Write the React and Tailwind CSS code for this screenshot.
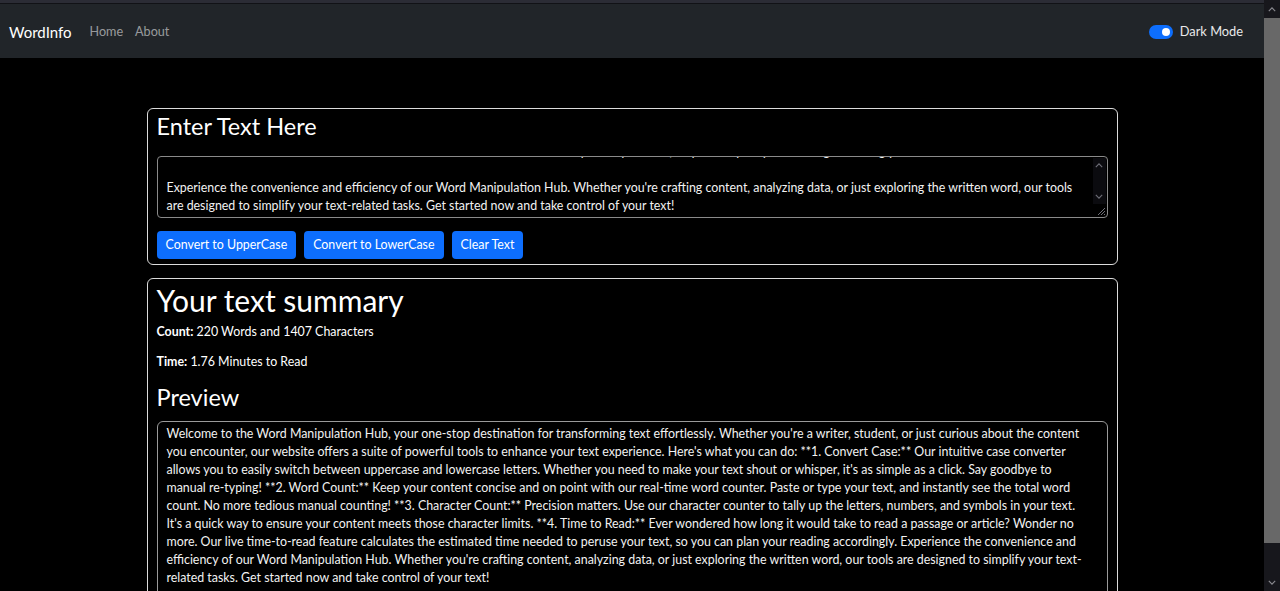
import React from 'react';

const inputLines = [
  "more. Our live time-to-read feature calculates the estimated time needed to peruse your text, so you can plan your reading accordingly.",
  "\u00a0",
  "Experience the convenience and efficiency of our Word Manipulation Hub. Whether you're crafting content, analyzing data, or just exploring the written word, our tools",
  "are designed to simplify your text-related tasks. Get started now and take control of your text!",
];

const previewLines = [
  "Welcome to the Word Manipulation Hub, your one-stop destination for transforming text effortlessly. Whether you're a writer, student, or just curious about the content",
  "you encounter, our website offers a suite of powerful tools to enhance your text experience. Here's what you can do: **1. Convert Case:** Our intuitive case converter",
  "allows you to easily switch between uppercase and lowercase letters. Whether you need to make your text shout or whisper, it's as simple as a click. Say goodbye to",
  "manual re-typing! **2. Word Count:** Keep your content concise and on point with our real-time word counter. Paste or type your text, and instantly see the total word",
  "count. No more tedious manual counting! **3. Character Count:** Precision matters. Use our character counter to tally up the letters, numbers, and symbols in your text.",
  "It's a quick way to ensure your content meets those character limits. **4. Time to Read:** Ever wondered how long it would take to read a passage or article? Wonder no",
  "more. Our live time-to-read feature calculates the estimated time needed to peruse your text, so you can plan your reading accordingly. Experience the convenience and",
  "efficiency of our Word Manipulation Hub. Whether you're crafting content, analyzing data, or just exploring the written word, our tools are designed to simplify your text-",
  "related tasks. Get started now and take control of your text!",
];

function Chevron({ up }) {
  return (
    <svg viewBox="0 0 10 6" className="h-[5px] w-[8px]" aria-hidden="true">
      <path d={up ? 'M1 5 L5 1 L9 5' : 'M1 1 L5 5 L9 1'} fill="none" stroke="currentColor" strokeWidth="1.4" />
    </svg>
  );
}

function Navbar() {
  return (
    <nav className="flex h-[54px] shrink-0 items-center justify-between bg-[#212529] pl-[9px] pr-[21px] pt-[2px]">
      <div className="flex items-center">
        <span className="text-[15px] text-white">WordInfo</span>
        <a className="ml-[18px] text-[12.6px] text-[#ffffff8c]">Home</a>
        <a className="ml-[12px] text-[12.6px] text-[#ffffff8c]">About</a>
      </div>
      <div className="flex items-center">
        <div className="flex h-[14px] w-[24px] items-center justify-end rounded-full bg-[#0d6efd] pr-[3px]">
          <div className="h-[8px] w-[8px] rounded-full bg-white" />
        </div>
        <span className="ml-[7px] text-[12.8px] text-[#e9e9ea]">Dark Mode</span>
      </div>
    </nav>
  );
}

function Button({ children }) {
  return (
    <button type="button" className="h-[28px] rounded-[4px] bg-[#0d6efd] px-[9px] text-[12.4px] text-white">
      {children}
    </button>
  );
}

export default function App() {
  return (
    <div className="flex h-[591px] w-[1280px] overflow-hidden bg-black text-white" style={{ fontFamily: 'Lato, "Noto Sans", sans-serif' }}>
      <div className="flex w-[1264px] flex-col">
        <div className="h-[3px] shrink-0 bg-[#2b2c35]" />
        <div className="h-[1px] shrink-0 bg-[#111216]" />
        <Navbar />

        <main className="mx-auto mt-[50px] flex w-[971px] shrink-0 flex-col gap-[13px]">
          <section className="shrink-0 rounded-[6px] border border-[#dcdcdc] px-[9px] pb-[5px] pt-[1px]">
            <h1 className="text-[23.5px] leading-[32px]">Enter Text Here</h1>
            <div className="relative mt-[14px] h-[62px] overflow-hidden rounded-[4px] border border-[#8a8a8a]">
              <div className="-mt-[17px] pl-[9px] pr-[24px] pt-[3px] text-[12.4px] leading-[18px] text-[#f2f2f2]">
                {inputLines.map((l, i) => (
                  <div key={i} className="whitespace-nowrap">{l}</div>
                ))}
              </div>
              <div className="absolute right-[1px] top-[1px] flex h-[46px] w-[13px] flex-col items-center justify-between bg-[#0b0b0f] py-[5px] text-[#6f6f78]">
                <Chevron up />
                <Chevron />
              </div>
              <svg viewBox="0 0 10 10" className="absolute bottom-[1px] right-[1px] h-[10px] w-[10px] text-[#6f6f78]" aria-hidden="true">
                <path d="M9 2 L2 9 M9 5 L5 9 M9 8 L8 9" stroke="currentColor" strokeWidth="1" />
              </svg>
            </div>
            <div className="mt-[13px] flex gap-[8px]">
              <Button>Convert to UpperCase</Button>
              <Button>Convert to LowerCase</Button>
              <Button>Clear Text</Button>
            </div>
          </section>

          <section className="shrink-0 rounded-[6px] border border-[#dcdcdc] px-[9px] pt-[2px]">
            <h1 className="text-[30px] leading-[38px]">Your text summary</h1>
            <p className="mt-[4px] text-[12.4px] leading-[18px]"><b>Count:</b> 220 Words and 1407 Characters</p>
            <p className="mt-[12px] text-[12.4px] leading-[18px]"><b>Time:</b> 1.76 Minutes to Read</p>
            <h2 className="mt-[10px] text-[23.5px] leading-[32px]">Preview</h2>
            <div className="mt-[8px] rounded-[6px] border border-[#9a9a9a] px-[9px] pb-[10px] pt-[3px] text-[12.4px] leading-[18px] text-[#f2f2f2]">
              {previewLines.map((l, i) => (
                <div key={i} className="whitespace-nowrap">{l}</div>
              ))}
            </div>
          </section>
        </main>
      </div>

      <div className="flex w-[16px] shrink-0 flex-col bg-[#17171c]">
        <div className="flex h-[18px] shrink-0 items-center justify-center text-[#8a8a90]"><Chevron up /></div>
        <div className="h-[525px] shrink-0 bg-[#686868]" />
        <div className="flex-1" />
        <div className="flex h-[18px] shrink-0 items-center justify-center text-[#8a8a90]"><Chevron /></div>
      </div>
    </div>
  );
}
